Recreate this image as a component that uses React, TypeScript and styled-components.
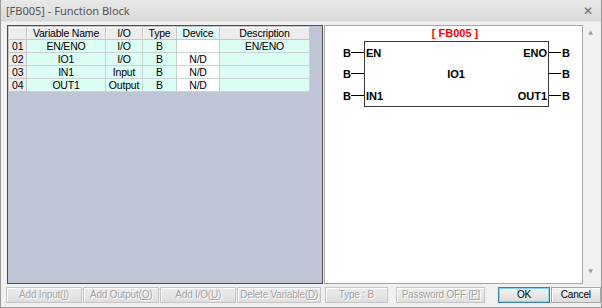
import styled, { createGlobalStyle } from "styled-components";

type VarRow = {
  no: string;
  name: string;
  io: string;
  type: string;
  device: string;
  description: string;
};

const rows: VarRow[] = [
  { no: "01", name: "EN/ENO", io: "I/O", type: "B", device: "", description: "EN/ENO" },
  { no: "02", name: "IO1", io: "I/O", type: "B", device: "N/D", description: "" },
  { no: "03", name: "IN1", io: "Input", type: "B", device: "N/D", description: "" },
  { no: "04", name: "OUT1", io: "Output", type: "B", device: "N/D", description: "" },
];

const pinYs = [25, 46, 68];

const GlobalStyle = createGlobalStyle`
  body {
    margin: 0;
    background: #f0f0f0;
    font-family: "Liberation Sans", "DejaVu Sans", sans-serif;
  }
`;

const App = () => {
  return (
    <>
      <GlobalStyle />
      <Window>
        <TitleBar>
          <Title>[FB005] - Function Block</Title>
          <CloseButton>✕</CloseButton>
        </TitleBar>
        <Content>
          <GridPanel>
            <VarTable>
              <colgroup>
                <col style={{ width: 18 }} />
                <col style={{ width: 79 }} />
                <col style={{ width: 37 }} />
                <col style={{ width: 34 }} />
                <col style={{ width: 43 }} />
                <col style={{ width: 90 }} />
              </colgroup>
              <thead>
                <tr>
                  <HeadCell />
                  <HeadCell>Variable Name</HeadCell>
                  <HeadCell>I/O</HeadCell>
                  <HeadCell>Type</HeadCell>
                  <HeadCell $active>Device</HeadCell>
                  <HeadCell>Description</HeadCell>
                </tr>
              </thead>
              <tbody>
                {rows.map((row) => (
                  <tr key={row.no}>
                    <IndexCell>{row.no}</IndexCell>
                    <Cell>{row.name}</Cell>
                    <Cell>{row.io}</Cell>
                    <Cell>{row.type}</Cell>
                    <Cell $plain>{row.device}</Cell>
                    <Cell>{row.description}</Cell>
                  </tr>
                ))}
              </tbody>
            </VarTable>
          </GridPanel>
          <PreviewPanel>
            <Canvas>
              <svg width="257" height="120" viewBox="0 0 257 120">
                <g fontSize="11" fontWeight="bold" fontFamily="Liberation Sans, sans-serif">
                  <text x="130" y="10" fill="#ff0000" textAnchor="middle">
                    [ FB005 ]
                  </text>
                  <rect x="39.5" y="14.5" width="184" height="65" fill="none" stroke="#3a3a3a" />
                  {pinYs.map((y) => (
                    <g key={y}>
                      <line x1="26" y1={y + 0.5} x2="39" y2={y + 0.5} stroke="#000" />
                      <line x1="224" y1={y + 0.5} x2="236" y2={y + 0.5} stroke="#000" />
                      <text x="18" y={y + 4.5}>B</text>
                      <text x="237" y={y + 4.5}>B</text>
                    </g>
                  ))}
                  <text x="41" y="29.5">EN</text>
                  <text x="41" y="72.5">IN1</text>
                  <text x="222" y="29.5" textAnchor="end">ENO</text>
                  <text x="222" y="72.5" textAnchor="end">OUT1</text>
                  <text x="131" y="51" textAnchor="middle">IO1</text>
                </g>
              </svg>
            </Canvas>
            <ScrollBar>
              <Arrow>▲</Arrow>
              <Arrow>▼</Arrow>
            </ScrollBar>
          </PreviewPanel>
        </Content>
        <ButtonBar>
          <ToolButton $w={77} disabled>Add Input(<u>I</u>)</ToolButton>
          <ToolButton $w={77} disabled>Add Output(<u>O</u>)</ToolButton>
          <ToolButton $w={77} disabled>Add I/O(<u>U</u>)</ToolButton>
          <ToolButton $w={85} disabled>Delete Variable(<u>D</u>)</ToolButton>
          <Spacer $w={2} />
          <ToolButton $w={63} disabled>Type : B</ToolButton>
          <Spacer $w={7} />
          <ToolButton $w={90} disabled>Password OFF [<u>P</u>]</ToolButton>
          <Spacer $w={11} />
          <ToolButton $w={52} $primary>OK</ToolButton>
          <ToolButton $w={51}>Cancel</ToolButton>
        </ButtonBar>
      </Window>
    </>
  );
};

const Window = styled.div`
  width: 602px;
  height: 308px;
  box-sizing: border-box;
  border: 1px solid #9a9a9a;
  border-top: none;
  background: #f0f0f0;
  display: flex;
  flex-direction: column;
`;

const TitleBar = styled.div`
  height: 21px;
  display: flex;
  align-items: center;
  justify-content: space-between;
  padding: 0 8px 0 5px;
  background: linear-gradient(#e9e9e9, #d9d9d9);
  border-bottom: 1px solid #e6e6e6;
`;

const Title = styled.span`
  font-family: "Noto Sans", "DejaVu Sans", sans-serif;
  font-size: 11px;
  color: #555555;
`;

const CloseButton = styled.span`
  font-family: "DejaVu Sans", sans-serif;
  font-size: 12px;
  color: #6a6a6a;
`;

const Content = styled.div`
  display: flex;
  gap: 1px;
  padding: 3px 0 0 6px;
  height: 259px;
`;

const GridPanel = styled.div`
  width: 316px;
  height: 259px;
  box-sizing: border-box;
  border: 1px solid #4e4e4e;
  background: #bfc5d5;
  overflow: hidden;
`;

const VarTable = styled.table`
  border-collapse: collapse;
  table-layout: fixed;
  width: 302px;
  font-size: 10.5px;
  font-family: "Liberation Sans", sans-serif;
  letter-spacing: -0.2px;
`;

const HeadCell = styled.th<{ $active?: boolean }>`
  height: 12px;
  padding: 0;
  font-weight: normal;
  text-align: center;
  line-height: 12px;
  background: ${(p) => (p.$active ? "#e0f8f6" : "#ececec")};
  border: 1px solid #c6c6c6;
  box-shadow: inset 1px 1px 0 #fafafa;
`;

const Cell = styled.td<{ $plain?: boolean }>`
  height: 12px;
  padding: 0;
  text-align: center;
  line-height: 12px;
  background: ${(p) => (p.$plain ? "#ffffff" : "#dcfdf4")};
  border: 1px solid #c9d3d1;
  white-space: nowrap;
`;

const IndexCell = styled.td`
  height: 12px;
  padding: 0 0 0 3px;
  line-height: 12px;
  background: #ececec;
  border: 1px solid #c6c6c6;
`;

const PreviewPanel = styled.div`
  flex: 1;
  display: flex;
  height: 259px;
`;

const Canvas = styled.div`
  width: 259px;
  box-sizing: border-box;
  border: 1px solid #a6a6a6;
  background: #ffffff;
  padding-top: 1px;
`;

const ScrollBar = styled.div`
  width: 15px;
  display: flex;
  flex-direction: column;
  justify-content: space-between;
  align-items: center;
  padding: 3px 0 10px;
`;

const Arrow = styled.span`
  font-family: "DejaVu Sans", sans-serif;
  font-size: 6px;
  color: #8fa0bd;
`;

const ButtonBar = styled.div`
  display: flex;
  gap: 1px;
  padding: 3px 0 0 5px;
`;

const Spacer = styled.div<{ $w: number }>`
  width: ${(p) => p.$w}px;
`;

const ToolButton = styled.button<{ $w: number; $primary?: boolean }>`
  width: ${(p) => p.$w}px;
  height: 16px;
  padding: 0;
  white-space: nowrap;
  overflow: hidden;
  font-family: "Liberation Sans", sans-serif;
  font-size: 10px;
  letter-spacing: -0.2px;
  line-height: 14px;
  color: #000;
  background: linear-gradient(#f4f4f4, #dcdcdc);
  border: 1px solid ${(p) => (p.$primary ? "#3c7fb1" : "#a8a8a8")};
  box-shadow: ${(p) => (p.$primary ? "inset 0 0 0 1px #8ed0f0" : "inset 1px 1px 0 #ffffff")};

  &:disabled {
    color: #a4a4a4;
    text-shadow: 1px 1px 0 #ffffff;
    border-color: #c4c4c4;
    background: linear-gradient(#ececec, #dedede);
  }

  u {
    text-decoration: underline;
  }
`;

export default App;
